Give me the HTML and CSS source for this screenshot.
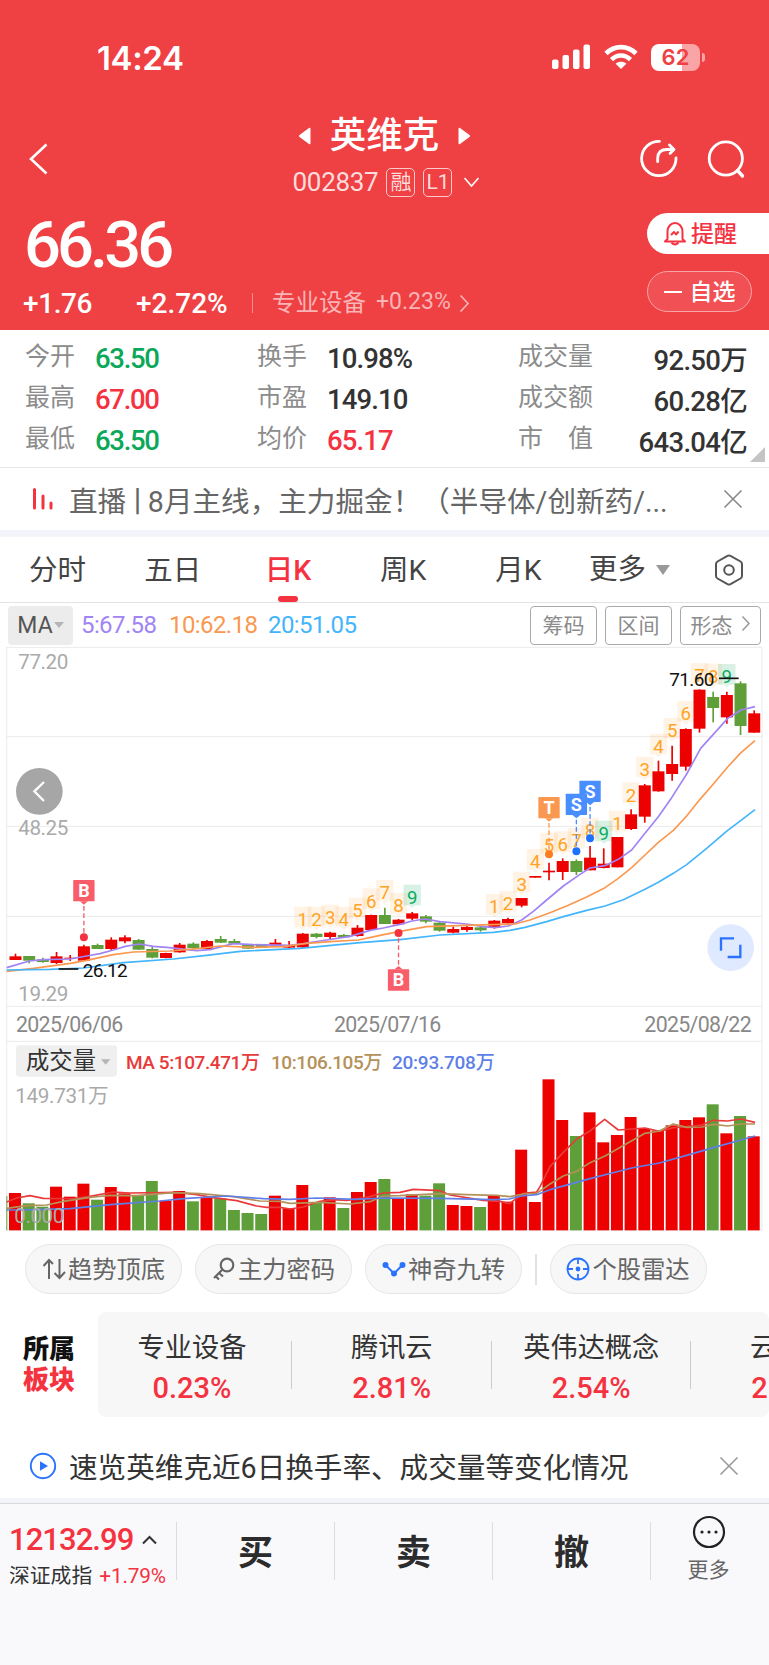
FILE: index.html
```
<!DOCTYPE html>
<html lang="zh-CN">
  <head>
    <title>英维克 002837</title>
    <meta charset="utf-8" />
    <link rel="stylesheet" href="styles.css">
  </head>
  <body>
    <div class="header">
      <div class="status">
        <span class="time">14:24</span>
        <div class="status-icons">
          <svg width="40" height="26" viewBox="0 0 40 26" fill="#fff">
            <rect x="0" y="15.500" width="6.500" height="9.500" rx="2"/>
            <rect x="10.500" y="11" width="6.500" height="14" rx="2"/>
            <rect x="21" y="5.500" width="6.500" height="19.500" rx="2"/>
            <rect x="31.500" y="0.500" width="6.500" height="24.500" rx="2"/>
          </svg>
          <svg class="wifi" width="34" height="26" viewBox="0 0 34 26" fill="none" stroke="#fff" stroke-width="4.600">
            <path d="M2 9.500C10.500 1 23.500 1 32 9.500"/>
            <path d="M7.500 15.600C13 10.200 21 10.200 26.500 15.600"/>
            <path d="M17 25L11.600 19.800C14.800 17.200 19.200 17.200 22.400 19.800Z" fill="#fff" stroke="none"/>
          </svg>
          <div class="battery">62</div>
          <i class="battery-tip"></i>
        </div>
      </div>
      <div class="nav">
        <svg class="back" width="20" height="32" viewBox="0 0 20 32" fill="none" stroke="#fff" stroke-width="2.600"><path d="M17.500 1.500L2 16L17.500 30.500"/></svg>
        <div class="title">
          <div class="name">
            <svg width="13" height="18" viewBox="0 0 13 18" fill="#fff"><path d="M11 1Q12.500 0 12.500 2V16Q12.500 18 11 17L1.500 10Q0 9 1.500 8Z"/></svg>
            <h1>英维克</h1>
            <svg width="13" height="18" viewBox="0 0 13 18" fill="#fff"><path d="M2 1Q.5 0 .5 2V16Q.5 18 2 17L11.500 10Q13 9 11.500 8Z"/></svg>
          </div>
          <div class="code">
            <span>002837</span><b class="rong">融</b><b>L1</b>
            <svg width="17" height="11" viewBox="0 0 17 11" fill="none" stroke="#fff" stroke-width="1.600"><path d="M1.500 1L8.500 9L15.500 1"/></svg>
          </div>
        </div>
        <div class="tools">
          <svg width="40" height="40" viewBox="0 0 40 40" fill="none" stroke="#fff" stroke-width="2.800" stroke-linecap="round" stroke-linejoin="round">
            <path d="M19.500 2.300A17.200 17.200 0 1 0 36 19"/>
            <path d="M17.700 22.700V19Q18 10.500 27 10.500H33.500M29.500 6L34 10.500L30 14.500"/>
          </svg>
          <svg width="40" height="40" viewBox="0 0 40 40" fill="none" stroke="#fff" stroke-width="2.800" stroke-linecap="round">
            <circle cx="18.800" cy="19.500" r="16.600"/><path d="M30.500 31.500L35.500 37" stroke-width="3.400"/>
          </svg>
        </div>
      </div>
      <div class="quote">
        <div class="quote-left">
          <div class="price">66.36</div>
          <div class="change">
            <span class="diff">+1.76</span><span class="rate">+2.72%</span>
            <i></i>
            <span class="trade">专业设备</span><span class="trade-rate">+0.23%</span>
            <svg width="11" height="19" viewBox="0 0 11 19" fill="none" stroke="#f9b4b5" stroke-width="1.700"><path d="M1.500 1.500L9 9.500L1.500 17.500"/></svg>
          </div>
        </div>
        <div class="quote-right">
          <div class="remind">
            <svg width="24" height="25" viewBox="0 0 24 25" fill="none" stroke="#f5323f" stroke-width="2" stroke-linejoin="round">
              <path d="M4.500 18V10.500A7.500 8.500 0 0 1 19.500 10.500V18L22 20.500H2Z"/>
              <path d="M8.500 21.500Q12 25.500 15.500 21.500M8 14L11 11L13 13.500L15.500 10.500"/>
            </svg><span>提醒</span>
          </div>
          <div class="own"><i></i><span>自选</span></div>
        </div>
      </div>
    </div>

    <div class="stats">
      <div class="col c1">
        <div><label>今开</label><span class="green">63.50</span></div>
        <div><label>最高</label><span class="red">67.00</span></div>
        <div><label>最低</label><span class="green">63.50</span></div>
      </div>
      <div class="col c2">
        <div><label>换手</label><span>10.98%</span></div>
        <div><label>市盈</label><span>149.10</span></div>
        <div><label>均价</label><span class="red">65.17</span></div>
      </div>
      <div class="col c3">
        <div><label>成交量</label><span>92.50万</span></div>
        <div><label>成交额</label><span>60.28亿</span></div>
        <div><label>市　值</label><span>643.04亿</span></div>
      </div>
      <i class="corner"></i>
    </div>

    <div class="notice live">
      <svg class="notice-icon" width="22" height="22" viewBox="0 0 22 22" stroke="#f5323f" stroke-width="3" stroke-linecap="round"><path d="M2.500 1.500V20M11 8V20M19 15V20"/></svg>
      <p>直播<span class="bar">丨</span>8月主线，主力掘金！（半导体/创新药/...</p>
      <svg class="close" width="20" height="20" viewBox="0 0 20 20" stroke="#888" stroke-width="1.600"><path d="M1.500 1.500L18.500 18.500M18.500 1.500L1.500 18.500"/></svg>
    </div>

    <div class="tabs">
      <span>分时</span>
      <span>五日</span>
      <span class="active">日K</span>
      <span>周K</span>
      <span>月K</span>
      <span class="more">更多<i></i></span>
      <svg width="30" height="32" viewBox="0 0 30 32" fill="none" stroke="#555" stroke-width="2" stroke-linejoin="round"><path d="M13.500 1.800Q15 1 16.500 1.800L26.500 7.500Q28 8.500 28 10V22Q28 23.500 26.500 24.500L16.500 30.200Q15 31 13.500 30.200L3.500 24.500Q2 23.500 2 22V10Q2 8.500 3.500 7.500Z"/><circle cx="15" cy="16" r="4.800"/></svg>
    </div>

    <div class="ma">
      <div class="ma-select">MA<i></i></div>
      <span class="ma5">5:67.58</span>
      <span class="ma10">10:62.18</span>
      <span class="ma20">20:51.05</span>
      <div class="ma-buttons">
        <button>筹码</button>
        <button>区间</button>
        <button class="wide">形态<svg width="10" height="17" viewBox="0 0 10 17" fill="none" stroke="#999" stroke-width="1.500"><path d="M1.500 1.500L8 8.500L1.500 15.500"/></svg></button>
      </div>
    </div>

    <svg class="chart" id="chart" width="769" height="590" viewBox="0 15 2307 1770"></svg>

    <div class="chips">
      <div class="chip">
        <svg width="24" height="24" viewBox="0 0 24 24" fill="none" stroke="#666" stroke-width="2"><path d="M7 22V3M1.500 9L7 3L11 7M17.500 2V20.500M12.500 16L17.500 21L23 15"/></svg><span>趋势顶底</span>
      </div>
      <div class="chip">
        <svg width="24" height="24" viewBox="0 0 24 24" fill="none" stroke="#666" stroke-width="2.200"><circle cx="15" cy="8" r="6.300"/><path d="M10.500 12.500L2 21M7 16L11 19.500M3.500 19L7 22.500"/></svg><span>主力密码</span>
      </div>
      <div class="chip">
        <svg width="24" height="24" viewBox="0 0 24 24" fill="#2b73ff" stroke="#2b73ff" stroke-width="2"><path d="M3.500 8L12 16.500L20.500 8" fill="none"/><circle cx="3.500" cy="8" r="2"/><circle cx="12" cy="16.500" r="2"/><circle cx="20.500" cy="8" r="2"/></svg><span>神奇九转</span>
      </div>
      <i></i>
      <div class="chip">
        <svg width="24" height="24" viewBox="0 0 24 24" fill="none" stroke="#2b73ff" stroke-width="1.800"><circle cx="12" cy="12" r="10.500"/><path d="M12 1.500V7M12 17V22.500M1.500 12H7M17 12H22.500"/><circle cx="12" cy="12" r="1.500" fill="#2b73ff"/></svg><span>个股雷达</span>
      </div>
    </div>

    <div class="sector">
      <div class="sector-title">所属<em>板块</em></div>
      <div class="sector-list">
        <div><p>专业设备</p><b>0.23%</b></div>
        <div><p>腾讯云</p><b>2.81%</b></div>
        <div><p>英伟达概念</p><b>2.54%</b></div>
        <div><p>云计算</p><b>2.06%</b></div>
      </div>
    </div>

    <div class="notice video">
      <svg class="notice-icon" width="28" height="28" viewBox="0 0 28 28"><circle cx="14" cy="14" r="12.200" fill="none" stroke="#2b73ff" stroke-width="1.900"/><path d="M11 9.200V18.800L19 14Z" fill="#2b73ff"/></svg>
      <p>速览英维克近6日换手率、成交量等变化情况</p>
      <svg class="close" width="20" height="20" viewBox="0 0 20 20" stroke="#999" stroke-width="1.600"><path d="M1.500 1.500L18.500 18.500M18.500 1.500L1.500 18.500"/></svg>
    </div>

    <div class="footer">
      <div class="index">
        <div class="index-value">12132.99<svg width="15" height="10" viewBox="0 0 15 10" fill="none" stroke="#333" stroke-width="2"><path d="M1 8.500L7.500 2L14 8.500"/></svg></div>
        <div class="index-name">深证成指 <span>+1.79%</span></div>
      </div>
      <div class="btn">买</div>
      <div class="btn">卖</div>
      <div class="btn">撤</div>
      <div class="btn-more">
        <svg width="34" height="34" viewBox="0 0 34 34"><circle cx="17" cy="17" r="15" fill="none" stroke="#222" stroke-width="2.200"/><g fill="#222"><circle cx="10" cy="17" r="1.600"/><circle cx="17" cy="17" r="1.600"/><circle cx="24" cy="17" r="1.600"/></g></svg>
        <span>更多</span>
      </div>
    </div>
    <script src="chart.js"></script>
  </body>
</html>
```
FILE: styles.css
```
*{
	margin:0;
	padding:0;
	box-sizing:border-box;
}
body{
	width:769px;
	height:1665px;
	overflow:hidden;
	background:#fff;
	color:#333;
	font-family:Roboto,"Noto Sans CJK SC",sans-serif;
}
svg{
	display:block;
	flex:none;
}
i,em{
	font-style:normal;
}
.red{
	color:#f5323f;
}
.green{
	color:#0aa858;
}

/* header */
.header{
	height:330px;
	background:#ef4043;
	color:#fff;
}
.status{
	height:114px;
	padding:38px 64px 0 97px;
	display:flex;
	justify-content:space-between;
}
.time{
	font-family:Inter,sans-serif;
	font-weight:600;
	font-size:33px;
	line-height:40px;
	letter-spacing:-0.4px;
}
.status-icons{
	height:38px;
	display:flex;
	align-items:center;
}
.wifi{
	margin:0 13px 0 12px;
}
.battery{
	width:49px;
	height:27px;
	border-radius:8px;
	background:linear-gradient(90deg,#fff 64%,#f9a5a6 64%);
	color:#ef4043;
	font:600 22px/27px Inter,sans-serif;
	text-align:center;
}
.battery-tip{
	width:3px;
	height:9px;
	margin-left:2px;
	border-radius:0 3px 3px 0;
	background:#f9a5a6;
}
.nav{
	height:94px;
	padding:0 22px 0 29px;
	display:flex;
	justify-content:space-between;
}
.back{
	margin-top:29px;
}
.title{
	width:240px;
	margin-left:80px;
}
.name{
	height:44px;
	display:flex;
	justify-content:center;
	align-items:center;
	gap:19px;
}
.name h1{
	font-size:36.500px;
	font-weight:500;
	line-height:42px;
}
.code{
	height:48px;
	display:flex;
	align-items:center;
	justify-content:center;
	font-size:26px;
	color:#fddcdc;
	padding-left:4px;
}
.code b{
	width:29px;
	height:29px;
	margin-left:8px;
	border:1.500px solid #fbc9ca;
	border-radius:5px;
	font-weight:400;
	font-size:21px;
	line-height:26px;
	text-align:center;
}
.code span{
	letter-spacing:-0.3px;
}
.code svg{
	margin-left:11px;
}
.tools{
	padding-top:25px;
	display:flex;
	gap:27px;
}
.quote{
	display:flex;
	justify-content:space-between;
}
.price{
	height:73px;
	padding-left:24px;
	font-size:65px;
	font-weight:500;
	line-height:75px;
	letter-spacing:-3.900px;
}
.change{
	height:44px;
	padding-left:23px;
	display:flex;
	align-items:center;
	font-size:28px;
	font-weight:500;
}
.diff{
	width:113px;
	letter-spacing:-0.400px;
}
.rate{
	width:116px;
}
.change i{
	width:1px;
	height:20px;
	background:#f58c8e;
	margin-right:19px;
}
.trade{
	width:104px;
	margin-top:-5px;
	color:#f9b4b5;
	font-size:23.500px;
	font-weight:400;
}
.trade-rate{
	width:83px;
	margin-top:-3px;
	color:#f9b4b5;
	font-size:23px;
	font-weight:400;
}
.quote-right{
	width:122px;
	padding-top:5px;
}
.remind{
	height:41px;
	padding-left:16px;
	border-radius:21px 0 0 21px;
	background:#fff;
	color:#f5323f;
	display:flex;
	align-items:center;
	gap:4px;
	font-size:23px;
	font-weight:500;
}
.remind span,.own span{
	padding-bottom:3px;
}
.own{
	width:105px;
	height:41px;
	margin-top:17px;
	border:1px solid #f8a5a7;
	border-radius:21px;
	background:#f15154;
	display:flex;
	align-items:center;
	justify-content:center;
	gap:8px;
	font-size:23px;
	font-weight:500;
}
.own i{
	width:18px;
	height:2px;
	background:#fff;
}

/* stats */
.stats{
	position:relative;
	height:138px;
	padding:8px 22px 0 25px;
	border-bottom:1px solid #e6e6e6;
	display:flex;
}
.col div{
	height:41px;
	display:flex;
	align-items:center;
	font-size:27.500px;
	font-weight:500;
}
.col label{
	font-size:25px;
	font-weight:400;
	color:#8c8c8c;
	line-height:36px;
	padding-bottom:3px;
}
.col span{
	letter-spacing:-1.3px;
}
.c1{
	width:232px;
}
.c2{
	width:261px;
}
.c3{
	flex:1;
}
.c1 label,.c2 label{
	width:70px;
}
.c2 span{
	letter-spacing:-0.9px;
}
.c3 div{
	justify-content:space-between;
}
.c3 span{
	letter-spacing:-0.7px;
	padding-bottom:2px;
}
.corner{
	position:absolute;
	right:4px;
	bottom:5px;
	border-left:15px solid transparent;
	border-bottom:15px solid #c4c4c4;
}

.notice{
	display:flex;
	align-items:center;
	font-size:28.600px;
}
.notice p{
	flex:1;
	white-space:nowrap;
}
.notice-icon{
	margin-right:14px;
}
.live{
	height:69px;
	padding:0 26px 0 32px;
	border-bottom:7px solid #f2f4f9;
	color:#666;
}
.live .notice-icon{
	margin-right:15px;
}
.bar{
	margin:0 -4px 0 -3px;
}

/* tabs */
.tabs{
	position:relative;
	height:66px;
	border-bottom:1px solid #e3e3e3;
	display:flex;
	align-items:center;
	font-size:28.500px;
	color:#444;
}
.tabs span{
	width:115.200px;
	height:65px;
	line-height:68px;
	text-align:center;
	position:relative;
}
.tabs .active{
	color:#f5323f;
	font-weight:500;
}
.tabs .active::after{
	content:"";
	position:absolute;
	left:48px;
	bottom:0;
	width:20px;
	height:6px;
	border-radius:3px;
	background:#f5323f;
}
.tabs .more{
	width:138px;
	padding-left:13px;
	text-align:left;
	display:flex;
	align-items:center;
}
.more i{
	margin-left:10px;
	border:7px solid transparent;
	border-top:10px solid #999;
	border-bottom:0;
}

/* ma */
.ma{
	height:42px;
	padding:2px 8px 0 8px;
	display:flex;
	align-items:center;
	font-size:24px;
}
.ma-select{
	width:65px;
	height:39px;
	border-radius:4px;
	background:#ececec;
	color:#555;
	display:flex;
	align-items:center;
	justify-content:center;
	font-size:23px;
	margin-right:8px;
}
.ma-select i{
	margin-left:1px;
	border:5px solid transparent;
	border-top:6px solid #b5b5b5;
	border-bottom:0;
}
.ma span{
	letter-spacing:-0.600px;
}
.ma5{
	width:88px;
	color:#a184f4;
}
.ma10{
	width:99px;
	color:#fb9850;
}
.ma20{
	color:#43b5fb;
}
.ma-buttons{
	margin-left:auto;
	display:flex;
	gap:8px;
}
.ma-buttons button{
	width:67px;
	height:39px;
	padding-bottom:3px;
	border:1px solid #aaa;
	border-radius:4px;
	background:#fff;
	color:#8c8c8c;
	font:21px "Noto Sans CJK SC",sans-serif;
}
.ma-buttons .wide{
	width:81px;
	display:flex;
	align-items:center;
	justify-content:center;
	gap:8px;
}

/* chart */
.chart text{
	font-family:Roboto,"Noto Sans CJK SC",sans-serif;
}

/* chips */
.chips{
	height:77px;
	padding:9px 0 0 25px;
	display:flex;
	align-items:flex-start;
}
.chip{
	width:157px;
	height:50px;
	margin-right:13px;
	border:1px solid #e6e6e6;
	border-radius:25px;
	background:#f7f7f7;
	color:#666;
	display:flex;
	align-items:center;
	justify-content:center;
	gap:2px;
	font-size:24.300px;
	white-space:nowrap;
}
.chip span{
	padding-bottom:3px;
}
.chips i{
	width:1.500px;
	height:31px;
	margin:10px 13px 0 0;
	background:#e2e2e2;
}

/* sector */
.sector{
	height:105px;
	display:flex;
	align-items:center;
	overflow:hidden;
}
.sector-title{
	width:98px;
	flex:none;
	padding-left:23px;
	font-size:26px;
	font-weight:900;
	line-height:31px;
	color:#111;
}
.sector-title em{
	display:block;
	color:#f5323f;
}
.sector-list{
	height:105px;
	border-radius:8px;
	background:#f7f7f7;
	display:flex;
	width:671px;
	overflow:hidden;
}
.sector-list div{
	position:relative;
	flex:none;
	width:199.500px;
	padding-top:17px;
	text-align:center;
}
.sector-list div:first-child{
	width:194px;
	padding-right:6px;
}
.sector-list div::after{
	content:"";
	position:absolute;
	right:0;
	top:29px;
	width:1px;
	height:48px;
	background:#ccc;
}
.sector-list p{
	font-size:27.200px;
	line-height:38px;
}
.sector-list b{
	display:block;
	font-weight:500;
	font-size:29px;
	line-height:42px;
	color:#f5323f;
}

.video{
	height:86px;
	padding:16px 30px 0 29px;
	border-bottom:5px solid #f2f4f9;
}
.video .notice-icon{
	margin-right:12px;
}

/* footer */
.footer{
	height:163px;
	border-top:1px solid #d9d9dc;
	background:#f9f9fc;
	display:flex;
	align-items:flex-start;
}
.index{
	width:176px;
	padding:15px 0 0 9px;
}
.index-value{
	height:42px;
	line-height:42px;
	font-size:31px;
	font-weight:500;
	letter-spacing:-0.950px;
	color:#f5323f;
	display:flex;
	align-items:center;
}
.index-value svg{
	margin-left:9px;
}
.index-name{
	font-size:20.800px;
	line-height:28px;
	margin-top:1px;
	white-space:nowrap;
}
.index-name span{
	color:#f5323f;
	margin-left:2px;
	letter-spacing:-0.200px;
}
.btn{
	width:158px;
	height:58px;
	margin-top:18px;
	border-left:1px solid #ddd;
	line-height:63px;
	text-align:center;
	font-size:35px;
	font-weight:700;
	color:#2c2c2c;
}
.btn-more{
	flex:1;
	height:58px;
	padding-right:3px;
	margin-top:18px;
	border-left:1px solid #ddd;
	display:flex;
	flex-direction:column;
	align-items:center;
	font-size:21px;
	line-height:30px;
	color:#666;
}
.btn-more svg{
	margin-top:-7px;
}
.btn-more span{
	margin-top:6px;
}
```
FILE: chart.js
```
var RED = '#ec0000';
var GREEN = '#5f9f3a';
var chart = document.getElementById('chart');
var STEP = 41.04;
var html = '';

// top, bottom, high, low, up
var candles = [
  [949,960,941,960,1],[948,962,948,970,0],[958,966,953,968,0],[949,969,936,972,1],[953,956,945,963,1],
  [919,962,914,962,1],[915,927,911,927,0],[899,927,892,930,1],[892,904,886,910,1],[900,929,897,930,0],
  [927,953,920,955,0],[939,954,938,955,1],[914,937,909,938,1],[911,924,907,926,0],[903,927,900,928,1],
  [897,908,888,909,0],[903,911,897,912,0],[914,926,914,926,0],[915,922,915,922,0],[908,917,897,920,1],
  [915,923,903,925,1],[881,922,879,925,1],[881,891,879,895,0],[878,891,875,900,1],[885,892,882,893,0],
  [863,888,855,890,1],[825,870,824,872,1],[825,852,803,852,0],[839,853,837,853,1],[820,836,816,840,1],
  [829,845,825,850,0],[848,872,845,875,0],[867,878,860,880,1],[861,870,857,875,1],[862,871,858,875,0],
  [842,864,840,866,1],[837,850,833,852,1],[774,797,774,802,1],[708,713,708,713,1],[692,697,668,721,1],
  [663,696,655,720,1],[663,696,658,705,0],[653,691,618,691,1],[671,684,625,685,1],[591,682,591,682,1],
  [523,567,508,570,1],[436,530,432,548,1],[394,454,362,455,1],[372,402,317,422,1],[267,380,265,392,1],
  [149,266,148,278,1],[171,204,155,247,0],[165,232,155,251,1],[130,258,124,285,0],[220,278,211,278,1]
];

var volumes = [
  489,520,530,470,500,461,509,471,490,497,453,512,483,514,502,505,540,549,552,497,535,465,517,502,534,486,456,447,
  507,493,497,460,525,528,531,497,515,359,516,148,270,318,247,337,315,261,297,302,286,270,262,223,310,258,319
];

var ma5 = '20,983 88,963 130,959 211,957 260,948 300,941 340,930 376,919 418,912 460,919 500,922 590,932 630,929 700,911 760,914 870,916 910,911 960,903 1050,889 1110,871 1150,864 1200,853 1236,843 1275,837 1320,845 1400,852 1450,860 1485,863 1525,858 1565,840 1600,814 1640,780 1690,738 1740,703 1770,684 1815,677 1855,658 1895,630 1935,580 1975,530 2015,473 2060,402 2102,325 2140,283 2183,235 2223,210 2265,200';
var ma10 = '20,994 100,985 211,970 260,961 340,944 400,936 510,933 600,925 660,918 760,922 850,920 920,910 990,905 1075,900 1140,886 1200,874 1280,860 1400,856 1500,853 1545,852 1590,840 1646,820 1700,798 1760,771 1815,743 1855,715 1895,683 1935,645 1975,607 2020,571 2060,528 2100,478 2140,432 2183,381 2223,338 2265,302';
var ma20 = '20,990 150,988 250,984 370,968 520,957 620,946 720,934 900,925 1080,908 1200,899 1320,885 1480,877 1530,871 1575,862 1640,845 1690,830 1760,811 1815,798 1870,779 1935,748 1975,727 2020,700 2060,674 2120,625 2183,571 2223,541 2265,509';

var vol5 = '20,516 50,504 90,497 130,505 220,506 270,499 340,486 390,489 530,487 590,494 640,503 710,512 770,528 800,532 840,532 870,537 910,531 960,514 1000,509 1040,511 1100,502 1150,489 1200,487 1240,478 1320,482 1350,495 1450,511 1500,514 1528,521 1570,490 1610,486 1620,470 1650,410 1690,367 1730,327 1770,303 1814,268 1855,300 1935,294 1978,304 2020,293 2060,290 2105,285 2140,271 2183,273 2223,267 2265,277';
var vol10 = '20,535 80,527 140,525 190,514 270,502 330,496 410,497 520,488 600,491 700,500 780,513 840,514 870,520 960,517 1050,522 1110,515 1150,498 1200,497 1320,491 1400,494 1490,496 1530,500 1570,492 1610,490 1650,462 1690,438 1730,424 1770,398 1815,378 1935,310 1978,303 2020,282 2060,292 2105,291 2140,283 2183,288 2223,282 2265,282';
var vol20 = '20,540 60,540 210,536 270,530 340,523 480,513 560,505 680,498 790,506 870,508 950,504 1070,508 1150,504 1320,505 1480,509 1528,507 1565,498 1610,494 1650,479 1730,457 1770,446 1895,414 1978,399 2060,376 2140,353 2223,330 2265,318';

// candle index, y of the number, number
var nines = [
  [21,838,1],[22,838,2],[23,832,3],[24,838,4],[25,811,5],[26,783,6],[27,758,7],[28,797,8],[29,772,9],
  [35,800,1],[36,791,2],[37,733,3],[38,665,4],[39,616,5],[40,612,6],[41,602,7],[42,571,8],[43,580,9],
  [44,550,1],[45,465,2],[46,388,3],[47,319,4],[48,272,5],[49,221,6],[50,107,7],[51,109,8],[52,110,9]
];

function line(x1, y1, x2, y2, color, w, more) {
  html += '<line x1="' + x1 + '" y1="' + y1 + '" x2="' + x2 + '" y2="' + y2 + '" stroke="' + color + '" stroke-width="' + w + '" ' + (more || '') + '/>';
}
function rect(x, y, w, h, color, more) {
  html += '<rect x="' + x + '" y="' + y + '" width="' + w + '" height="' + h + '" fill="' + color + '" ' + (more || '') + '/>';
}
function text(str, x, y, size, color, width, more) {
  html += '<text x="' + x + '" y="' + y + '" font-size="' + size + '" fill="' + color + '" ' + (width ? 'textLength="' + width + '" ' : '') + (more || '') + '>' + str + '</text>';
}
function poly(points, color, w) {
  html += '<polyline points="' + points + '" fill="none" stroke="' + color + '" stroke-width="' + w + '" stroke-linejoin="round"/>';
}
function center(i) {
  return 46.5 + STEP * i;
}
// B / S / T flag with the dotted leader to its dot
function flag(letter, i, y, dotY, color, dot, up) {
  var x = center(i);
  var tip = up ? y - 32 : y + 32;
  var dir = up ? -1 : 1;
  line(x, tip + 14 * dir, x, dotY, color, 4, 'stroke-dasharray="14 8"');
  html += '<circle cx="' + x + '" cy="' + dotY + '" r="12" fill="' + dot + '"/>';
  rect(x - 32, y - 32, 64, 64, color, 'rx="2"');
  html += '<path d="M' + (x - 12) + ' ' + tip + 'h24l-12 ' + 10 * dir + 'z" fill="' + color + '"/>';
  text(letter, x, y + 19, 54, '#fff', 0, 'text-anchor="middle" font-weight="700"');
}

// grid
[22, 290, 559, 829, 1099, 1204].forEach(function (y) {
  line(19, y, 2286, y, '#ebebeb', 3);
});
line(20, 22, 20, 1771, '#ebebeb', 3);
line(2286, 22, 2286, 1771, '#ebebeb', 3);
line(19, 1771, 2286, 1771, '#ebebeb', 3);

nines.forEach(function (n) {
  var x = center(n[0]);
  var last = n[2] === 9;
  var bg = last ? '#0aa858' : '#ffa030';
  rect(x - 26, n[1] - 38, 52, 62, bg, 'opacity="' + (last ? 0.16 : 0.12) + '"');
  html += '<path d="M' + (x - 9) + ' ' + (n[1] + 24) + 'h18l-9 9z" fill="' + bg + '" opacity=".12"/>';
});

candles.forEach(function (c, i) {
  var color = c[4] ? RED : GREEN;
  line(center(i), c[2], center(i), c[3], color, 5);
  rect(center(i) - 18, c[0], 36, c[1] - c[0], color);
});

nines.forEach(function (n) {
  text(n[2], center(n[0]), n[1] + 20, 56, n[2] === 9 ? '#0cab62' : '#ffa424', 0, 'text-anchor="middle"');
});

poly(ma5, '#a184f4', 5);
poly(ma10, '#fb9850', 5);
poly(ma20, '#43b5fb', 5);

flag('B', 5, 752, 892, '#f95d6a', '#f5323f');
flag('B', 28, 1020, 879, '#f95d6a', '#f5323f', true);
flag('T', 39, 503, 643, '#fb9850', '#ff7d1f');
flag('S', 42, 454, 595, '#4a8dff', '#1f70ff');
flag('S', 41, 493, 634, '#4a8dff', '#1f70ff');

text('77.20', 55, 87, 62, '#aaa', 150);
text('48.25', 55, 585, 62, '#aaa', 150);
text('19.29', 55, 1083, 62, '#aaa', 150);
text('2025/06/06', 48, 1176, 64, '#888', 322);
text('2025/07/16', 1002, 1176, 64, '#888', 322);
text('2025/08/22', 1933, 1176, 64, '#888', 322);
line(176, 987, 235, 987, '#111', 5);
text('26.12', 248, 1010, 57, '#111', 135);
line(2157, 115, 2216, 115, '#111', 5);
text('71.60', 2008, 138, 57, '#111', 135);

// volume pane
rect(19, 1668, 3, 103, GREEN);
volumes.forEach(function (v, i) {
  rect(center(i) - 19.5, v + 1170, 36, 601 - v, candles[i][4] ? RED : GREEN);
});
html += '<g transform="translate(0,1170)">';
poly(vol5, '#e83a3a', 5);
poly(vol10, '#b5915a', 5);
poly(vol20, '#5f7fe8', 5);
html += '</g>';
rect(48, 1216, 303, 94, '#efefef', 'rx="10"');
text('成交量', 78, 1287, 70, '#333', 210);
html += '<path d="M303 1258h28l-14 16z" fill="#b5b5b5"/>';
text('MA 5:107.471万', 378, 1288, 57, '#e83a3a', 402, 'font-weight="500"');
text('10:106.105万', 813, 1288, 57, '#b5915a', 334, 'font-weight="500"');
text('20:93.708万', 1176, 1288, 57, '#5f7fe8', 308, 'font-weight="500"');
text('149.731万', 46, 1388, 62, '#aaa', 280);
text('0.000', 43, 1748, 62, '#aaa', 150);

// round buttons over the chart
html += '<circle cx="118" cy="454" r="70" fill="#a6a6a6"/><path d="M132 426L103 454L132 483" fill="none" stroke="#fff" stroke-width="7"/>';
html += '<circle cx="2192" cy="923" r="70" fill="#dfe9ff"/><path d="M2163 932V895H2202M2221 914V951H2183" fill="none" stroke="#2b73ff" stroke-width="7"/>';

chart.innerHTML = html;
```
